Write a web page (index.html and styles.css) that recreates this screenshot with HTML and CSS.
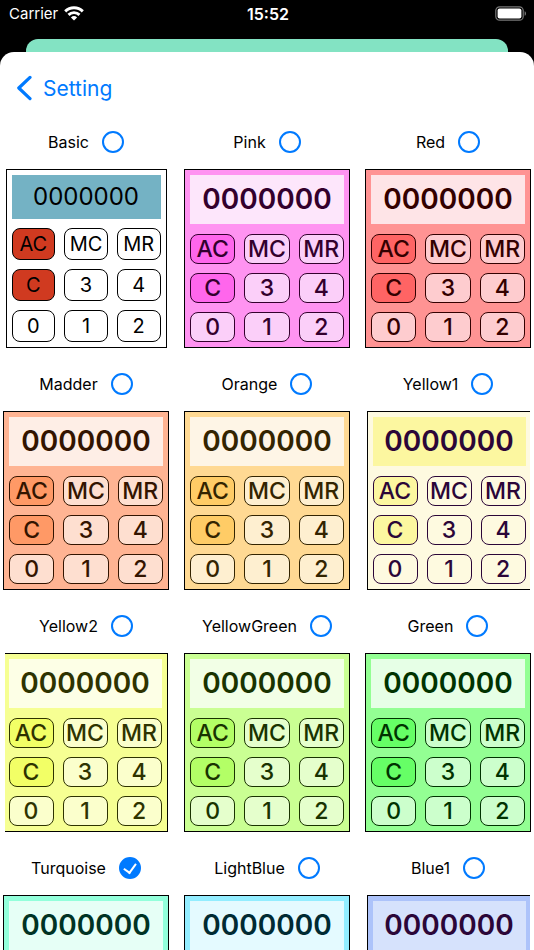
FILE: index.html
```html
<!DOCTYPE html>
<html lang="en">
<head>
  <meta charset="UTF-8">
  <meta name="viewport" content="width=device-width, initial-scale=1.0">
  <title>Setting</title>
  <link rel="stylesheet" href="styles.css">
</head>
<body>
  <header class="status-bar">
    <div class="carrier">
      <span>Carrier</span>
      <svg width="20" height="15" viewBox="0 0 20 15" aria-hidden="true">
        <g fill="none" stroke="#fff" stroke-width="2.9">
          <path d="M1.2 5.4a12.6 12.6 0 0 1 17.6 0"/>
          <path d="M4.5 8.9a7.9 7.9 0 0 1 11 0"/>
        </g>
        <path d="M10 14.6L6.9 11.4a4.5 4.5 0 0 1 6.2 0z" fill="#fff"/>
      </svg>
    </div>
    <div class="clock">15:52</div>
    <svg class="battery" width="32" height="15" viewBox="0 0 32 15" aria-hidden="true">
      <rect x="0.8" y="0.8" width="27.4" height="13.4" rx="3.8" fill="none" stroke="#777" stroke-width="1.2"/>
      <rect x="2.6" y="2.6" width="23.8" height="9.8" rx="2" fill="#fff"/>
      <path d="M29.6 5.2v4.6c1.9-.7 1.9-3.9 0-4.6z" fill="#777"/>
    </svg>
  </header>

  <div class="back-sheet"></div>

  <main class="sheet">
    <nav>
      <a class="back" href="#">
        <svg width="16" height="26" viewBox="0 0 16 26" aria-hidden="true">
          <path d="M14 2.4L2.8 13 14 23.6" fill="none" stroke="#007aff" stroke-width="3.2" stroke-linecap="round" stroke-linejoin="round"/>
        </svg>
        <span>Setting</span>
      </a>
    </nav>
    <div class="themes" id="themes"></div>
  </main>

  <script>
    const themes = [
      { name: "Basic", cls: "basic" },
      { name: "Pink", cls: "pink" },
      { name: "Red", cls: "red" },
      { name: "Madder", cls: "madder" },
      { name: "Orange", cls: "orange" },
      { name: "Yellow1", cls: "yellow1 open-right" },
      { name: "Yellow2", cls: "yellow2 open-left" },
      { name: "YellowGreen", cls: "yellowgreen" },
      { name: "Green", cls: "green" },
      { name: "Turquoise", cls: "turquoise" },
      { name: "LightBlue", cls: "lightblue" },
      { name: "Blue1", cls: "blue1 open-right" }
    ];
    const keys = ["AC", "MC", "MR", "C", "3", "4", "0", "1", "2"];
    const selected = "Turquoise";

    const keysHtml = keys.map(k =>
      `<button type="button" class="key${k === "AC" || k === "C" ? " clear" : ""}">${k}</button>`
    ).join("");

    document.getElementById("themes").innerHTML = themes.map(t => `
      <section class="theme">
        <label class="theme-label">
          <span>${t.name}</span>
          <input type="radio" name="theme" value="${t.name}" ${t.name === selected ? "checked" : ""}>
        </label>
        <div class="calc ${t.cls}">
          <div class="display">0000000</div>
          <div class="keys"></div>
        </div>
      </section>`).join("");

    // fill a key pad only once it is on screen
    function fillVisible() {
      document.querySelectorAll(".keys:empty").forEach(pad => {
        if (pad.getBoundingClientRect().top < window.innerHeight) {
          pad.innerHTML = keysHtml;
        }
      });
    }
    fillVisible();
    document.querySelector(".sheet").addEventListener("scroll", fillVisible);
    window.addEventListener("resize", fillVisible);
  </script>
</body>
</html>
```

FILE: styles.css
```css
* {
  box-sizing: border-box;
}
body {
  margin: 0;
  height: 100vh;
  display: flex;
  flex-direction: column;
  overflow: hidden;
  background-color: #000;
  font-family: Inter, "Liberation Sans", sans-serif;
}

/* status bar */
.status-bar {
  display: grid;
  grid-template-columns: 1fr auto 1fr;
  align-items: center;
  height: 27px;
  margin-bottom: 12px;
  padding: 0 7px 0 9px;
  color: #fff;
  font-size: 15px;
}
.carrier {
  display: flex;
  align-items: center;
  gap: 6px;
}
.clock {
  font-size: 16px;
  font-weight: 600;
}
.battery {
  justify-self: end;
}

/* sheets */
.back-sheet {
  height: 13px;
  flex-shrink: 0;
  margin: 0 26px;
  background-color: #83e3c3;
  border-radius: 12px 12px 0 0;
}
.sheet {
  flex: 1;
  min-height: 0;
  overflow-y: auto;
  scrollbar-width: none;
  background-color: #fff;
  border-radius: 14px 14px 0 0;
}
nav {
  display: flex;
  padding: 21px 16px 28px;
}
.back {
  display: flex;
  align-items: center;
  gap: 11px;
  height: 30px;
  color: #007aff;
  font-size: 21px;
  text-decoration: none;
}

/* theme list */
.themes {
  display: grid;
  grid-template-columns: repeat(3, 1fr);
  gap: 25px 15px;
  padding: 0 3px;
}
.theme {
  display: flex;
  flex-direction: column;
  align-items: center;
  gap: 16px;
}
.theme-label {
  display: flex;
  align-items: center;
  gap: 13px;
  height: 22px;
  font-size: 16px;
}
.theme-label input {
  appearance: none;
  width: 22px;
  height: 22px;
  margin: 0;
  border: 2px solid #007aff;
  border-radius: 50%;
}
.theme-label input:checked {
  display: grid;
  place-items: center;
  background-color: #007aff;
}
.theme-label input:checked::before {
  content: "";
  width: 6px;
  height: 10px;
  margin-bottom: 2px;
  border: solid #fff;
  border-width: 0 2px 2px 0;
  transform: rotate(36deg);
}

/* calculator preview */
.calc {
  width: 100%;
  min-height: 179px;
  padding: 5px;
  border: 1px solid #000;
  background-color: var(--body);
  color: var(--ink);
  font-weight: 500;
}
.display {
  height: 49px;
  margin-bottom: 10px;
  background-color: var(--display);
  font-size: 28px;
  font-weight: 600;
  line-height: 49px;
  text-align: center;
}
.keys {
  display: grid;
  grid-template-columns: repeat(3, 1fr);
  gap: 9px;
}
.key {
  display: flex;
  align-items: center;
  justify-content: center;
  min-width: 0;
  height: 30px;
  padding: 0;
  border: 1px solid var(--ink);
  border-radius: 8px;
  background-color: var(--key);
  color: inherit;
  font: inherit;
  font-size: 23px;
}
.key.clear {
  background-color: var(--clear);
}
.open-right {
  width: 163px;
  padding-right: 4px;
  border-right: none;
}
.open-left {
  width: 163px;
  padding-left: 4px;
  border-left: none;
}

.basic {
  --body: #fff;
  --display: #74b2c4;
  --key: #fff;
  --clear: #d03a20;
  --ink: #000;
  width: 161px;
  font-weight: 400;
}
.basic .display {
  height: 44px;
  margin-bottom: 9px;
  font-size: 24px;
  font-weight: 400;
  line-height: 44px;
}
.basic .key {
  height: 32px;
  font-size: 20px;
}
.pink {
  --body: #ff93f1;
  --display: #fde6fb;
  --key: #fbcff9;
  --clear: #ff66ec;
  --ink: #33002d;
}
.red {
  --body: #ff9393;
  --display: #fee4e7;
  --key: #fecccf;
  --clear: #ff6464;
  --ink: #330000;
}
.madder {
  --body: #ffb493;
  --display: #feeee6;
  --key: #fedfd0;
  --clear: #ff9966;
  --ink: #331400;
}
.orange {
  --body: #ffd993;
  --display: #fef5e6;
  --key: #feefd0;
  --clear: #ffcc66;
  --ink: #332400;
}
.yellow1 {
  --body: #fefae0;
  --display: #fcf7a0;
  --key: #fefae0;
  --clear: #fcf7a0;
  --ink: #2b0638;
}
.yellow2 {
  --body: #f6ff93;
  --display: #fdffe6;
  --key: #fbffcc;
  --clear: #f2ff66;
  --ink: #2e3300;
}
.yellowgreen {
  --body: #caff93;
  --display: #f2ffe6;
  --key: #e5ffcc;
  --clear: #b3ff66;
  --ink: #193300;
}
.green {
  --body: #93ff93;
  --display: #e6ffe6;
  --key: #ccffcc;
  --clear: #66ff66;
  --ink: #003300;
}
.turquoise {
  --body: #93ffdb;
  --display: #e6fff6;
  --key: #ccffee;
  --clear: #66ffcc;
  --ink: #003324;
}
.lightblue {
  --body: #93edff;
  --display: #e4faff;
  --key: #ccf6ff;
  --clear: #66e5ff;
  --ink: #002a33;
}
.blue1 {
  --body: #adc3fa;
  --display: #d6e2fc;
  --key: #d6e2fc;
  --clear: #8fadf8;
  --ink: #2b0638;
}
```
